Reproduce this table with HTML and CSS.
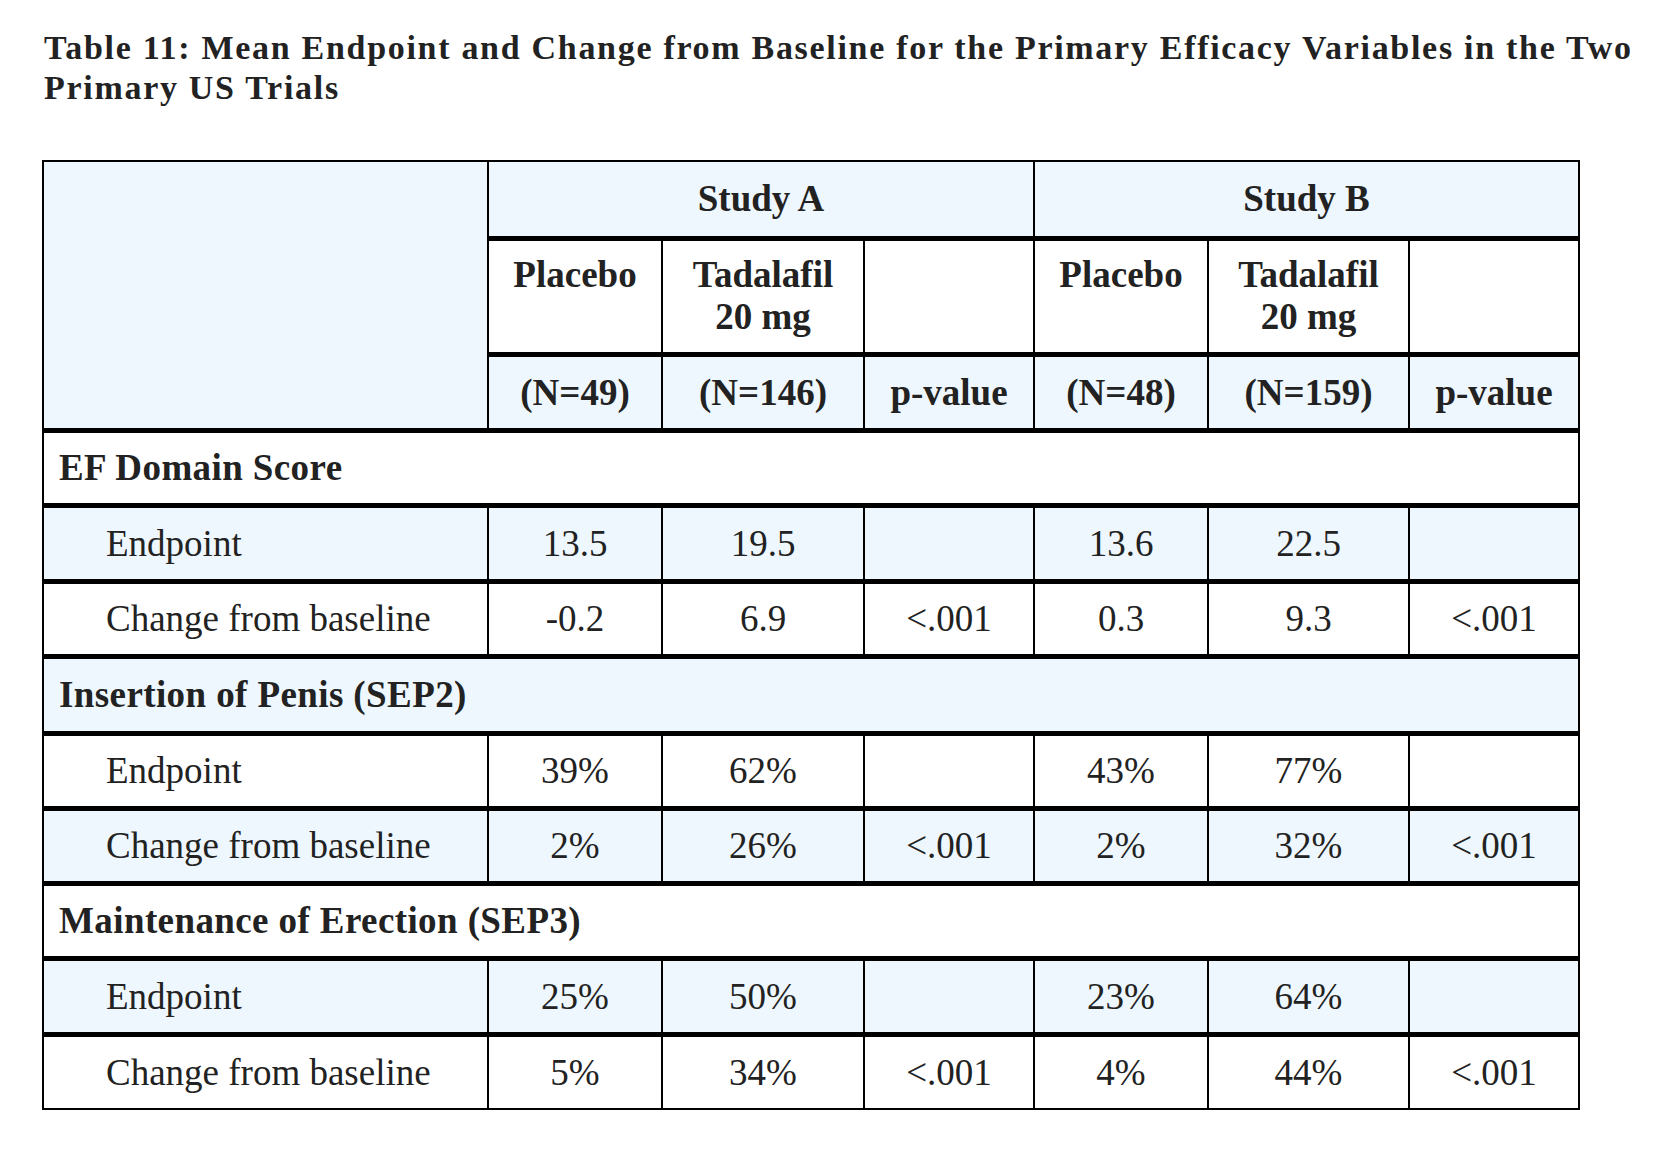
FILE: index.html
```html
<!DOCTYPE html>
<html lang="en">
<head>
<meta charset="utf-8">
<title>Table 11</title>
<link rel="stylesheet" href="styles.css">
</head>
<body>
<h1 class="title">Table 11: Mean Endpoint and Change from Baseline for the Primary Efficacy Variables in the Two<br>Primary US Trials</h1>
<table class="efficacy">
  <colgroup>
    <col class="c-label">
    <col class="c-plc">
    <col class="c-tad">
    <col class="c-p">
    <col class="c-plc2">
    <col class="c-tad2">
    <col class="c-p2">
  </colgroup>
  <tr class="r-study">
    <td class="corner blue" rowspan="3"></td>
    <th class="hd blue" colspan="3">Study A</th>
    <th class="hd blue last" colspan="3">Study B</th>
  </tr>
  <tr class="r-arm">
    <th class="hd arm">Placebo</th>
    <th class="hd arm">Tadalafil<br>20 mg</th>
    <th class="hd arm"></th>
    <th class="hd arm">Placebo</th>
    <th class="hd arm">Tadalafil<br>20 mg</th>
    <th class="hd arm last"></th>
  </tr>
  <tr class="r-n">
    <th class="hd blue">(N=49)</th>
    <th class="hd blue">(N=146)</th>
    <th class="hd blue">p-value</th>
    <th class="hd blue">(N=48)</th>
    <th class="hd blue">(N=159)</th>
    <th class="hd blue last">p-value</th>
  </tr>

  <tr class="r-sec1">
    <td class="sec last" colspan="7">EF Domain Score</td>
  </tr>
  <tr class="r-end1 blue">
    <td class="lbl">Endpoint</td>
    <td class="num">13.5</td><td class="num">19.5</td><td class="num"></td>
    <td class="num">13.6</td><td class="num">22.5</td><td class="num last"></td>
  </tr>
  <tr class="r-chg1">
    <td class="lbl">Change from baseline</td>
    <td class="num">-0.2</td><td class="num">6.9</td><td class="num">&lt;.001</td>
    <td class="num">0.3</td><td class="num">9.3</td><td class="num last">&lt;.001</td>
  </tr>

  <tr class="r-sec2 blue">
    <td class="sec last" colspan="7">Insertion of Penis (SEP2)</td>
  </tr>
  <tr class="r-end2">
    <td class="lbl">Endpoint</td>
    <td class="num">39%</td><td class="num">62%</td><td class="num"></td>
    <td class="num">43%</td><td class="num">77%</td><td class="num last"></td>
  </tr>
  <tr class="r-chg2 blue">
    <td class="lbl">Change from baseline</td>
    <td class="num">2%</td><td class="num">26%</td><td class="num">&lt;.001</td>
    <td class="num">2%</td><td class="num">32%</td><td class="num last">&lt;.001</td>
  </tr>

  <tr class="r-sec3">
    <td class="sec last" colspan="7">Maintenance of Erection (SEP3)</td>
  </tr>
  <tr class="r-end3 blue">
    <td class="lbl">Endpoint</td>
    <td class="num">25%</td><td class="num">50%</td><td class="num"></td>
    <td class="num">23%</td><td class="num">64%</td><td class="num last"></td>
  </tr>
  <tr class="r-chg3 final">
    <td class="lbl">Change from baseline</td>
    <td class="num">5%</td><td class="num">34%</td><td class="num">&lt;.001</td>
    <td class="num">4%</td><td class="num">44%</td><td class="num last">&lt;.001</td>
  </tr>
</table>
</body>
</html>
```

FILE: styles.css
```css
html, body {
  margin: 0;
  padding: 0;
  background: #ffffff;
}

body {
  font-family: "Liberation Serif", "Times New Roman", serif;
  color: #222222;
}

.title {
  margin: 28px 0 52px 44px;
  font-size: 34px;
  line-height: 40px;
  font-weight: bold;
  letter-spacing: 1.7px;
  color: #222222;
  white-space: nowrap;
}

.efficacy {
  margin-left: 42px;
  border: 2px solid #000;
  border-collapse: separate;
  border-spacing: 0;
  table-layout: fixed;
  width: 1538px;
  font-size: 37px;
  line-height: 42px;
}

.c-label { width: 445px; }
.c-plc { width: 174px; }
.c-tad { width: 202px; }
.c-p { width: 170px; }
.c-plc2 { width: 174px; }
.c-tad2 { width: 201px; }
.c-p2 { width: 168px; }

.efficacy td,
.efficacy th {
  box-sizing: border-box;
  padding: 0;
  border-right: 2px solid #000;
  border-bottom: 5px solid #000;
  vertical-align: middle;
}

.efficacy .last {
  border-right: none;
}

.efficacy .final td {
  border-bottom: none;
}

.blue,
.blue td {
  background: #eef7fd;
}

.hd {
  font-weight: bold;
  text-align: center;
}

.arm {
  vertical-align: top !important;
  padding-top: 13px !important;
}

.r-study { height: 79px; }
.r-arm { height: 116px; }
.r-n { height: 76px; }

.r-sec1 { height: 75px; }
.r-end1 { height: 76px; }
.r-chg1 { height: 75px; }
.r-sec2 { height: 77px; }
.r-end2 { height: 75px; }
.r-chg2 { height: 75px; }
.r-sec3 { height: 75px; }
.r-end3 { height: 76px; }
.r-chg3 { height: 71px; }

.sec {
  font-weight: bold;
  text-align: left;
  letter-spacing: 0.4px;
  padding-left: 15px !important;
}

.lbl {
  text-align: left;
  padding-left: 62px !important;
}

.num {
  text-align: center;
}
```
